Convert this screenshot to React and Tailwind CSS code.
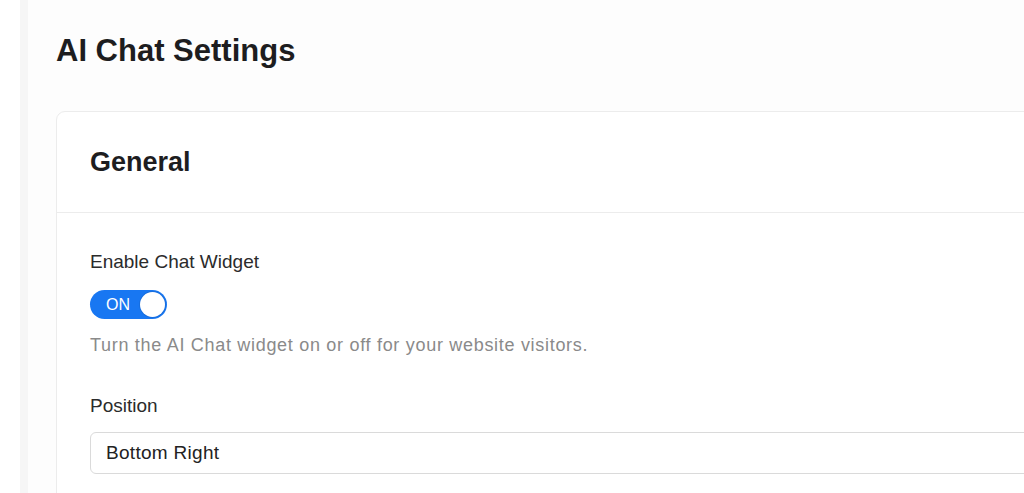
import React, { useState } from "react";

const font = { fontFamily: '"Liberation Sans", Arial, sans-serif' };

const Toggle = ({ on, onChange }) => (
  <button
    type="button"
    onClick={() => onChange(!on)}
    className={`mt-[16px] flex items-center w-[77px] h-[29px] rounded-full p-[2px] ${
      on ? "bg-[#1877f2] justify-between" : "bg-[#c4c4c4] flex-row-reverse justify-between"
    }`}
  >
    <span className="pl-[14px] pr-[6px] text-[16px] leading-none text-white">
      {on ? "ON" : "OFF"}
    </span>
    <span className="w-[25px] h-[25px] rounded-full bg-white shadow-[0_0_0_1px_rgba(0,0,0,0.08)]" />
  </button>
);

export default function App() {
  const [enabled, setEnabled] = useState(true);
  const [position, setPosition] = useState("Bottom Right");

  return (
    <div className="flex h-screen overflow-hidden bg-white" style={font}>
      <div className="w-[20px] shrink-0 bg-white" />
      <div className="w-[8px] shrink-0 bg-[#f6f6f6]" />
      <main className="flex-1 bg-[#fdfdfd] pl-[28px] pt-[33px]">
        <h1 className="text-[31px] leading-[36px] font-bold text-[#1d1d1f]">
          AI Chat Settings
        </h1>

        <section className="mt-[42px] w-[1060px] shrink-0 rounded-[9px] border border-[#ececec] bg-white">
          <div className="border-b border-[#ececec] px-[33px] py-[34px]">
            <h2 className="text-[27px] leading-[32px] font-bold text-[#1d1d1f]">General</h2>
          </div>

          <div className="px-[33px] pt-[37px] pb-[40px]">
            <label className="block text-[19px] leading-[24px] text-[#2b2b2b]">
              Enable Chat Widget
            </label>
            <Toggle on={enabled} onChange={setEnabled} />
            <p className="mt-[14px] text-[18px] leading-[24px] tracking-[0.7px] text-[#8a8a8a]">
              Turn the AI Chat widget on or off for your website visitors.
            </p>

            <label className="mt-[37px] block text-[19px] leading-[24px] text-[#2b2b2b]">
              Position
            </label>
            <div className="mt-[14px] flex h-[42px] items-center rounded-[6px] border border-[#dadada] bg-white pl-[15px]">
              <select
                value={position}
                onChange={(e) => setPosition(e.target.value)}
                className="w-full appearance-none bg-transparent text-[19px] tracking-[0.3px] text-[#222] outline-none"
              >
                <option>Bottom Right</option>
                <option>Bottom Left</option>
              </select>
            </div>
          </div>
        </section>
      </main>
    </div>
  );
}
